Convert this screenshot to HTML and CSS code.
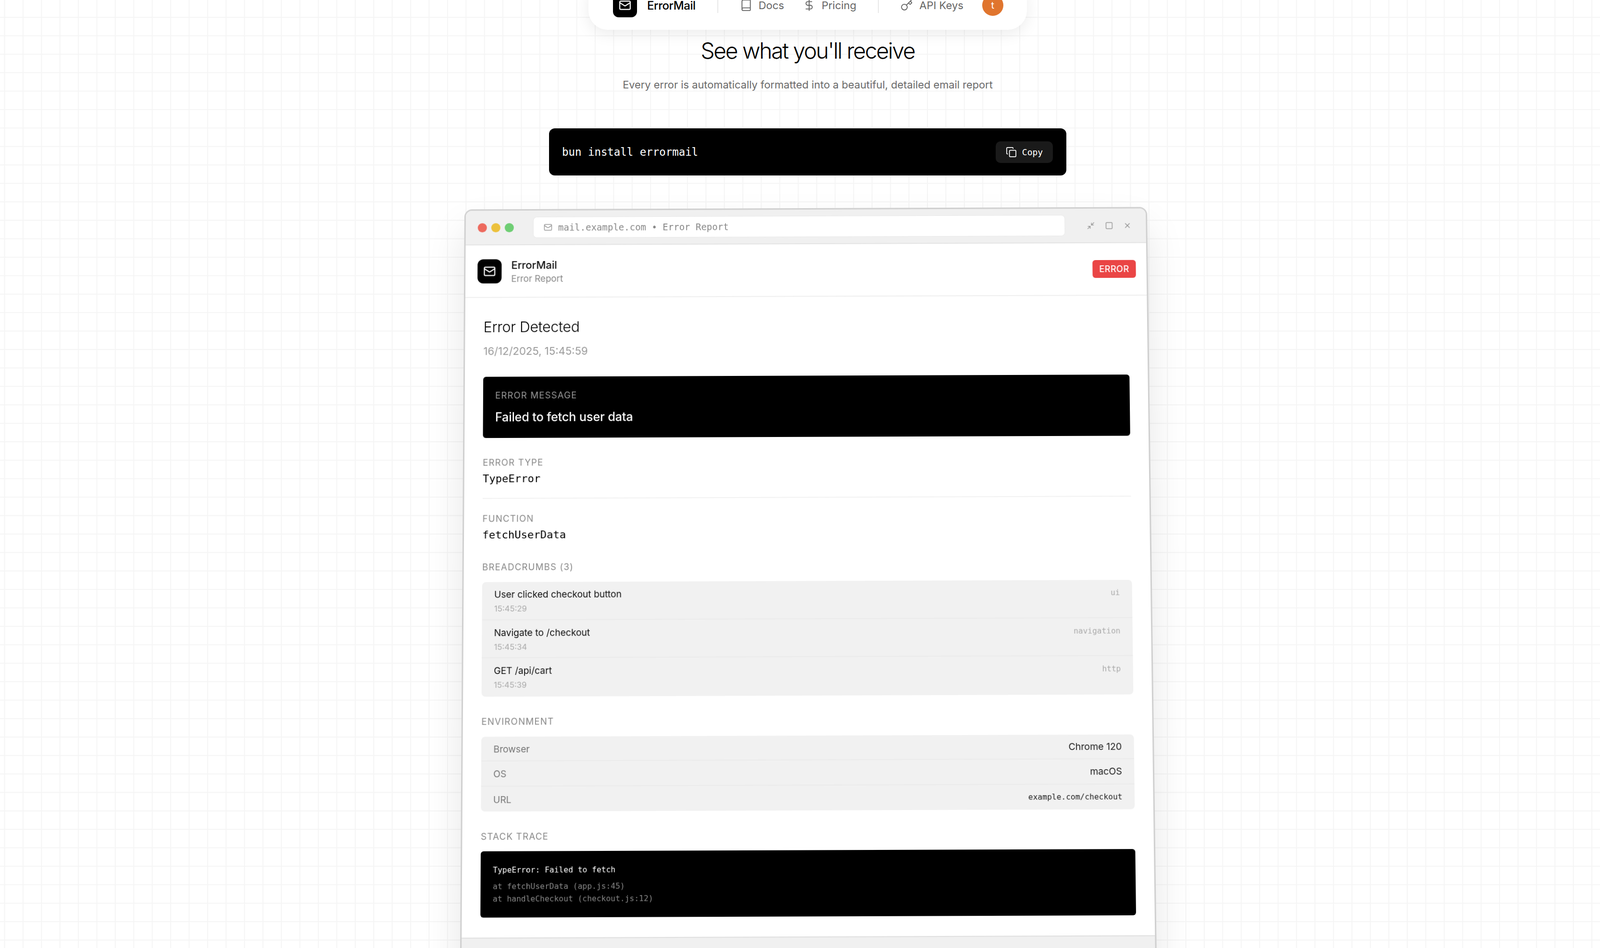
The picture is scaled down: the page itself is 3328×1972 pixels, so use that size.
FILE: index.html
```html
<!DOCTYPE html>
<html lang="en">
<head>
<meta charset="utf-8">
<title>ErrorMail</title>
<link rel="stylesheet" href="styles.css">
</head>
<body>
<main class="page">
  <nav class="nav">
    <span class="logo"><svg class="ic-mail" viewBox="0 0 24 24"><rect x="2" y="4" width="20" height="16" rx="2"/><path d="m22 7-8.97 5.7a1.94 1.94 0 0 1-2.06 0L2 7"/></svg></span>
    <span class="nav-brand">ErrorMail</span>
    <span class="nav-sep"></span>
    <a class="nav-link"><svg class="ic-nav" viewBox="0 0 24 24"><path d="M4 19.5v-15A2.5 2.5 0 0 1 6.5 2H19a1 1 0 0 1 1 1v18a1 1 0 0 1-1 1H6.5a1 1 0 0 1 0-5H20"/></svg>Docs</a>
    <a class="nav-link"><svg class="ic-nav" viewBox="0 0 24 24"><line x1="12" y1="2" x2="12" y2="22"/><path d="M17 5H9.5a3.5 3.5 0 0 0 0 7h5a3.5 3.5 0 0 1 0 7H6"/></svg>Pricing</a>
    <span class="nav-sep"></span>
    <a class="nav-link"><svg class="ic-nav" viewBox="0 0 24 24"><path d="m15.5 7.5 2.3 2.3a1 1 0 0 0 1.4 0l2.1-2.1a1 1 0 0 0 0-1.4L19 4"/><path d="m21 2-9.6 9.6"/><circle cx="7.5" cy="15.5" r="5.5"/></svg>API Keys</a>
    <span class="avatar">t</span>
  </nav>

  <h1 class="title">See what you'll receive</h1>
  <p class="subtitle">Every error is automatically formatted into a beautiful, detailed email report</p>

  <div class="install">
    <code class="install-cmd">bun install errormail</code>
    <button class="copy"><svg class="ic-copy" viewBox="0 0 24 24"><rect x="8" y="8" width="14" height="14" rx="2"/><path d="M4 16c-1.1 0-2-.9-2-2V4c0-1.1.9-2 2-2h10c1.1 0 2 .9 2 2"/></svg>Copy</button>
  </div>

  <section class="window">
    <div class="titlebar">
      <span class="light red"></span><span class="light yellow"></span><span class="light green"></span>
      <div class="urlbar">
        <svg class="ic-url" viewBox="0 0 24 24"><rect x="2" y="4" width="20" height="16" rx="2"/><path d="m22 7-8.97 5.7a1.94 1.94 0 0 1-2.06 0L2 7"/></svg>
        <span>mail.example.com • Error Report</span>
      </div>
      <div class="controls">
        <svg viewBox="0 0 24 24"><path d="M4 14h6v6"/><path d="M20 10h-6V4"/><path d="m14 10 7-7"/><path d="m3 21 7-7"/></svg>
        <svg viewBox="0 0 24 24"><rect x="3" y="3" width="18" height="18" rx="2"/></svg>
        <svg viewBox="0 0 24 24"><path d="M18 6 6 18"/><path d="m6 6 12 12"/></svg>
      </div>
    </div>

    <header class="mail-head">
      <span class="logo"><svg class="ic-mail" viewBox="0 0 24 24"><rect x="2" y="4" width="20" height="16" rx="2"/><path d="m22 7-8.97 5.7a1.94 1.94 0 0 1-2.06 0L2 7"/></svg></span>
      <div class="mail-brand">
        <div class="mail-name">ErrorMail</div>
        <div class="mail-sub">Error Report</div>
      </div>
      <span class="badge">ERROR</span>
    </header>

    <div class="mail-body">
      <h2 class="mail-title">Error Detected</h2>
      <div class="mail-date">16/12/2025, 15:45:59</div>

      <div class="message">
        <div class="label label-dark">ERROR MESSAGE</div>
        <div class="message-text">Failed to fetch user data</div>
      </div>

      <div class="field field-type">
        <div class="label">ERROR TYPE</div>
        <div class="field-value">TypeError</div>
      </div>
      <div class="field field-fn">
        <div class="label">FUNCTION</div>
        <div class="field-value">fetchUserData</div>
      </div>

      <div class="section">
        <div class="label">BREADCRUMBS (3)</div>
        <div class="panel">
          <div class="crumb"><div><div class="crumb-title">User clicked checkout button</div><div class="crumb-time">15:45:29</div></div><span class="crumb-tag">ui</span></div>
          <div class="crumb"><div><div class="crumb-title">Navigate to /checkout</div><div class="crumb-time">15:45:34</div></div><span class="crumb-tag">navigation</span></div>
          <div class="crumb"><div><div class="crumb-title">GET /api/cart</div><div class="crumb-time">15:45:39</div></div><span class="crumb-tag">http</span></div>
        </div>
      </div>

      <div class="section">
        <div class="label">ENVIRONMENT</div>
        <div class="panel">
          <div class="env"><span class="env-key">Browser</span><span class="env-val">Chrome 120</span></div>
          <div class="env"><span class="env-key">OS</span><span class="env-val">macOS</span></div>
          <div class="env"><span class="env-key">URL</span><span class="env-val env-mono">example.com/checkout</span></div>
        </div>
      </div>

      <div class="section">
        <div class="label">STACK TRACE</div>
        <div class="stack">
          <div class="stack-head">TypeError: Failed to fetch</div>
          <div class="stack-line">at fetchUserData (app.js:45)</div>
          <div class="stack-line">at handleCheckout (checkout.js:12)</div>
        </div>
      </div>
    </div>
    <footer class="mail-foot"></footer>
  </section>
</main>
</body>
</html>
```

FILE: styles.css
```css
* { box-sizing: border-box; }
html, body { margin: 0; height: 100%; overflow: hidden; }
body {
  font-family: Inter, "Liberation Sans", sans-serif;
  color: #000;
  background-color: #fff;
  background-image:
    linear-gradient(to right, #f5f5f5 2px, transparent 2px),
    linear-gradient(to bottom, #f5f5f5 2px, transparent 2px);
  background-size: 38.4px 38.4px;
  background-position: 8.5px 35px;
}
svg { fill: none; stroke: currentColor; stroke-width: 2; stroke-linecap: round; stroke-linejoin: round; flex: none; }

.page {
  position: relative;
  margin-left: 32px;
  padding-top: 77px;
  display: flex;
  flex-direction: column;
  align-items: center;
}

/* nav */
.nav {
  position: absolute;
  top: -40px;
  left: 50%;
  transform: translateX(-50%);
  width: 912px;
  height: 102px;
  padding: 0 52px 0 51px;
  display: flex;
  align-items: center;
  white-space: nowrap;
  background: #fff;
  border-radius: 40px;
  box-shadow: 0 8px 32px rgba(0, 0, 0, .08);
}
.logo {
  width: 50px;
  height: 50px;
  border-radius: 12px;
  background: #000;
  color: #fff;
  display: flex;
  align-items: center;
  justify-content: center;
  flex: none;
}
.ic-mail { width: 26px; height: 26px; }
.nav-brand { margin-left: 21px; font-size: 24px; font-weight: 450; letter-spacing: -.45px; }
.nav-sep { width: 2px; height: 32px; margin: 0 45px; background: #e8e8e8; flex: none; }
.nav-link { display: flex; align-items: center; gap: 13px; color: #666; font-size: 22px; }
.nav-link + .nav-link { margin-left: 39px; }
.ic-nav { width: 26px; height: 26px; stroke-width: 1.75; }
.avatar {
  width: 44px;
  height: 44px;
  margin-left: 39px;
  border-radius: 50%;
  background: #e0752e;
  color: #fff;
  font-size: 20px;
  display: flex;
  align-items: center;
  justify-content: center;
  flex: none;
}

/* hero */
.title { margin: 0; font-size: 46px; line-height: 56px; font-weight: 300; letter-spacing: -2.2px; }
.subtitle { margin: 28px 0 0; font-size: 21.8px; line-height: 30px; color: #6b6b6b; }

.install {
  width: 1076px;
  height: 98px;
  margin-top: 76px;
  padding: 0 28px 0 27px;
  background: #000;
  border-radius: 12px;
  display: flex;
  align-items: center;
  justify-content: space-between;
}
.install-cmd { font-family: "DejaVu Sans Mono", monospace; font-size: 22.4px; color: #fff; }
.copy {
  width: 119px;
  height: 45px;
  padding: 0;
  border: 0;
  border-radius: 10px;
  background: #1a1a1a;
  color: #fff;
  font-family: "DejaVu Sans Mono", monospace;
  font-size: 18px;
  display: flex;
  align-items: center;
  justify-content: center;
  gap: 11px;
}
.ic-copy { width: 23px; height: 23px; stroke-width: 1.75; }

/* window */
.window {
  width: 1420px;
  margin-top: 68px;
  flex: none;
  background: #fff;
  border: 3px solid #d0d0d0;
  border-radius: 16px;
  overflow: hidden;
  box-shadow: 0 40px 80px rgba(0, 0, 0, .1);
  transform-origin: 50% 0;
  transform: translateX(-4px) perspective(2000px) rotateX(1.5deg) rotate(-.2deg);
}
.titlebar {
  height: 72px;
  padding: 0 30px 0 25px;
  display: flex;
  align-items: center;
  background: #f0f0f0;
  border-bottom: 2px solid #e4e4e4;
}
.light { width: 19px; height: 19px; border-radius: 50%; margin-right: 9px; flex: none; }
.red { background: #ed6a5e; }
.yellow { background: #ecc13c; }
.green { background: #6fce74; }
.urlbar {
  flex: 1;
  height: 44px;
  margin: 0 45px 0 31px;
  padding-left: 21px;
  border-radius: 8px;
  background: #fff;
  border: 1px solid #e8e8e8;
  display: flex;
  align-items: center;
  gap: 12px;
  color: #888;
  font-family: "DejaVu Sans Mono", monospace;
  font-size: 19px;
}
.ic-url { width: 18px; height: 18px; color: #999; }
.controls { display: flex; gap: 21px; color: #888; }
.controls svg { width: 17px; height: 17px; stroke-width: 1.75; }

.mail-head {
  height: 109px;
  padding: 0 22px 0 25px;
  display: flex;
  align-items: center;
  border-bottom: 2px solid #efefef;
}
.mail-brand { margin-left: 20px; padding-top: 5px; }
.mail-name { font-size: 22px; line-height: 28px; font-weight: 500; letter-spacing: -.1px; color: #111; }
.mail-sub { font-size: 18.7px; line-height: 30px; color: #888; }
.badge {
  margin-left: auto;
  width: 90px;
  height: 37px;
  border-radius: 6px;
  background: #ea4545;
  color: #fff;
  font-size: 18px;
  font-weight: 500;
  letter-spacing: .5px;
  display: flex;
  align-items: center;
  justify-content: center;
}

.mail-body { padding: 40px 38px 40px; }
.mail-title { margin: 0; font-size: 30px; line-height: 40px; font-weight: 350; letter-spacing: -.2px; }
.mail-date { margin-top: 15px; font-size: 22px; line-height: 30px; color: #999; }

.message {
  height: 126px;
  margin-top: 38px;
  padding: 26px 25px 0;
  background: #000;
  border-radius: 6px;
}
.label { font-size: 18.4px; line-height: 24px; letter-spacing: 1.2px; color: #888; }
.label-dark { color: #999; }
.message-text { margin-top: 17px; font-size: 25px; line-height: 32px; font-weight: 500; letter-spacing: -.1px; color: #fff; }

.field-type { margin-top: 38px; padding-bottom: 24px; border-bottom: 2px solid #f2f2f2; }
.field-fn { margin-top: 28px; }
.field-value { margin-top: 7px; font-family: "DejaVu Sans Mono", monospace; font-size: 22px; line-height: 30px; color: #000; }

.section { margin-top: 38px; }
.panel { margin-top: 19px; background: #f1f1f1; border-radius: 8px; overflow: hidden; }
.crumb {
  height: 77.5px;
  padding: 13px 25px 0;
  display: flex;
  justify-content: space-between;
  border-bottom: 2px solid #ebebeb;
}
.crumb:last-child, .env:last-child { border-bottom: 0; }
.crumb-title { font-size: 19px; line-height: 26px; color: #111; }
.crumb-time { margin-top: 2px; font-size: 16.5px; line-height: 26px; color: #aaa; }
.crumb-tag { font-family: "DejaVu Sans Mono", monospace; font-size: 16px; line-height: 26px; color: #aaa; }

.env {
  height: 50.5px;
  padding: 0 25px;
  display: flex;
  align-items: center;
  justify-content: space-between;
  border-bottom: 2px solid #ebebeb;
}
.env-key { padding-top: 3px; font-size: 19px; color: #777; }
.env-val { font-size: 19.3px; color: #222; }
.env-mono { font-family: "DejaVu Sans Mono", monospace; font-size: 16px; }

.stack {
  height: 133px;
  margin-top: 18px;
  padding: 25px;
  background: #000;
  border-radius: 6px;
  font-family: "DejaVu Sans Mono", monospace;
  font-size: 16px;
  line-height: 25px;
  color: #888;
}
.stack-head { color: #fff; margin-bottom: 8px; }

.mail-foot { height: 200px; background: #f0f0f0; border-top: 2px solid #e0e0e0; }
```
